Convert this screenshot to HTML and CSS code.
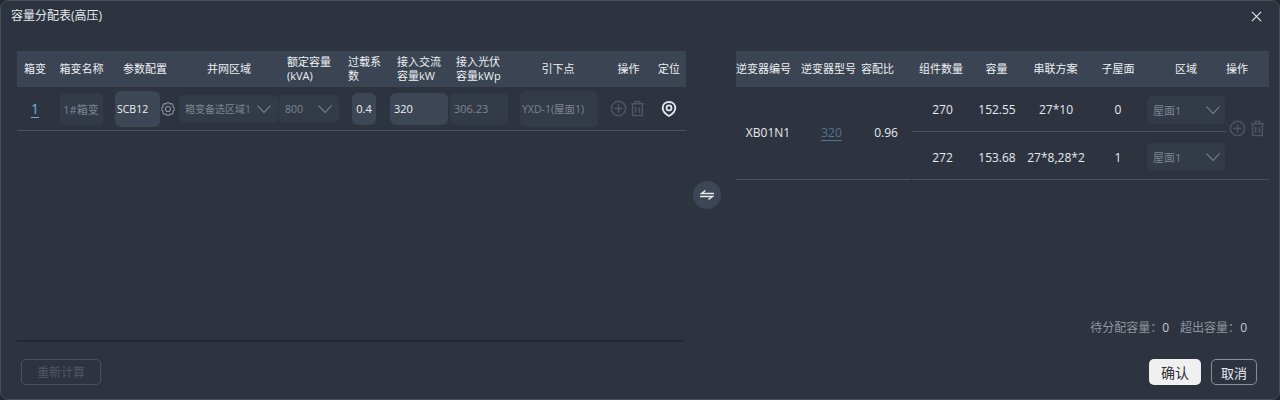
FILE: index.html
```html
<!DOCTYPE html>
<html lang="zh">
<head>
<meta charset="utf-8">
<title>容量分配表(高压)</title>
<link rel="stylesheet" href="styles.css">
</head>
<body>
<svg class="defs" width="0" height="0" aria-hidden="true">
  <symbol id="chev" viewBox="0 0 16 10"><path d="M1.5 1.5 8 8.5l6.500-7" fill="none" stroke="currentColor" stroke-width="1.1"/></symbol>
  <symbol id="plus" viewBox="0 0 18 18"><circle cx="9" cy="9" r="7.6" fill="none" stroke="currentColor" stroke-width="1.5"/><path d="M9 4.5v9M4.5 9h9" fill="none" stroke="currentColor" stroke-width="1.5"/></symbol>
  <symbol id="trash" viewBox="0 0 16 18"><path d="M1 4h14M5.500 4V1.500h5V4M2.800 4v12.500h10.400V4M6 7.500v6M10 7.500v6" fill="none" stroke="currentColor" stroke-width="1.6"/></symbol>
</svg>
<div class="modal">
  <header class="head">
    <span class="title">容量分配表(高压)</span>
    <svg class="close" viewBox="0 0 12 12"><path d="M1 1l10 10M11 1 1 11" fill="none" stroke="currentColor" stroke-width="1.1"/></svg>
  </header>
  <main class="main">
    <section class="left">
      <div class="grid-l thead">
        <div class="c">箱变</div><div class="c">箱变名称</div><div class="c">参数配置</div><div class="c">并网区域</div>
        <div class="s">额定容量<br>(kVA)</div><div class="s s-a">过载系<br>数</div><div class="s s-b">接入交流<br>容量kW</div><div class="s s-c">接入光伏<br>容量kWp</div>
        <div class="c h-yxd">引下点</div><div class="c">操作</div><div class="c">定位</div>
      </div>
      <div class="grid-l lrow">
        <div class="c"><a class="link big">1</a></div>
        <div class="c"><span class="box name">1#箱变</span></div>
        <div class="cfg">
          <span class="box on scb">SCB12</span>
          <svg class="gear" viewBox="0 0 24 24"><path d="M15.100 4.400A3.400 3.400 0 0 1 19.600 8.900 3.400 3.400 0 0 1 19.600 15.100 3.400 3.400 0 0 1 15.100 19.600 3.400 3.400 0 0 1 8.900 19.600 3.400 3.400 0 0 1 4.400 15.100 3.400 3.400 0 0 1 4.400 8.900 3.400 3.400 0 0 1 8.900 4.400 3.400 3.400 0 0 1 15.100 4.400z" fill="none" stroke="currentColor" stroke-width="1.700"/><circle cx="12" cy="12" r="3.800" fill="none" stroke="currentColor" stroke-width="1.700"/></svg>
        </div>
        <div class="sel-w"><span class="box sel area"><span>箱变备选区域1</span><svg class="chev"><use href="#chev"/></svg></span></div>
        <div class="sel-w"><span class="box sel cap"><span>800</span><svg class="chev"><use href="#chev"/></svg></span></div>
        <div class="c"><span class="box on ratio">0.4</span></div>
        <div class="lft"><span class="box on ac">320</span></div>
        <div class="lft"><span class="box pv">306.23</span></div>
        <div class="c"><span class="box yxd">YXD-1(屋面1)</span></div>
        <div class="ops"><svg class="ic-p"><use href="#plus"/></svg><svg class="ic-t"><use href="#trash"/></svg></div>
        <div class="c"><svg class="pin" viewBox="0 0 16 16"><path d="M8 1C4.200 1 1.700 3.500 1.700 6.800 1.700 10 4.900 13.300 8 15c3.100-1.700 6.300-5 6.300-8.200C14.300 3.500 11.800 1 8 1z" fill="none" stroke="currentColor" stroke-width="1.900"/><circle cx="8" cy="6.900" r="2.500" fill="none" stroke="currentColor" stroke-width="1.800"/></svg></div>
      </div>
      <div class="bar"></div>
    </section>
    <div class="mid">
      <button class="swap"><svg viewBox="0 0 14 10"><path d="M14 3.500H1.500L5.500 .5M0 6.500h12.500L8.500 9.500" fill="none" stroke="currentColor" stroke-width="1.400"/></svg></button>
    </div>
    <section class="right">
      <div class="grid-r thead">
        <div class="hl">逆变器编号</div><div class="hl">逆变器型号</div><div class="hl">容配比</div><div class="c">组件数量</div><div class="c">容量</div><div class="c">串联方案</div><div class="c">子屋面</div><div class="c">区域</div><div class="h-op">操作</div>
      </div>
      <div class="rbody">
        <div class="rfix">
          <div class="c">XB01N1</div><div class="c nudge"><a class="link dim">320</a></div><div class="c">0.96</div>
        </div>
        <div class="rsub">
          <div class="grid-s">
            <div class="c nudge">270</div><div class="c">152.55</div><div class="c">27*10</div><div class="c">0</div>
            <div class="sel-r"><span class="box sel roof"><span>屋面1</span><svg class="chev"><use href="#chev"/></svg></span></div>
          </div>
          <div class="grid-s">
            <div class="c nudge">272</div><div class="c">153.68</div><div class="c">27*8,28*2</div><div class="c">1</div>
            <div class="sel-r"><span class="box sel roof"><span>屋面1</span><svg class="chev"><use href="#chev"/></svg></span></div>
          </div>
        </div>
        <div class="rops"><svg class="ic-p"><use href="#plus"/></svg><svg class="ic-t"><use href="#trash"/></svg></div>
      </div>
      <div class="stat"><span>待分配容量：<b>0</b></span><span>超出容量：<b>0</b></span></div>
    </section>
  </main>
  <footer class="foot">
    <button class="btn off">重新计算</button>
    <div class="acts"><button class="btn ok">确认</button><button class="btn no">取消</button></div>
  </footer>
</div>
</body>
</html>
```
FILE: styles.css
```css
* { box-sizing: border-box; }
html, body { margin: 0; height: 400px; overflow: hidden; background: #23262c; }
body { font-family: "Open Sans", "Noto Sans CJK SC", sans-serif; font-size: 12px; color: #e6e9ee; }
.defs { position: absolute; }
.modal { height: 400px; background: #2d3440; border: 1px solid #484e58; border-radius: 8px; display: flex; flex-direction: column; padding: 0 10px 14px 16px; }
.head { height: 50px; flex: none; display: flex; justify-content: space-between; padding-top: 6px; align-items: flex-start; }
.title { font-size: 12px; line-height: 18px; margin-left: -6px; }
.close { width: 11px; height: 11px; margin: 4px 7px 0 0; color: #eceef1; }
.main { flex: 1; display: flex; min-height: 0; }
.left { width: 669px; flex: none; display: flex; flex-direction: column; }
.mid { width: 50px; flex: none; display: flex; align-items: center; justify-content: center; padding: 0 8px 4px 0; }
.swap { width: 28px; height: 28px; border: 0; border-radius: 50%; background: #3d4654; color: #e6e9ee; padding: 0; display: flex; align-items: center; justify-content: center; }
.swap svg { width: 14px; height: 10px; }
.right { width: 533px; flex: none; display: flex; flex-direction: column; }
.thead { height: 36px; background: #3a4452; line-height: 14px; font-size: 11px; align-items: center; color: #eef0f3; }
.c { text-align: center; display: flex; align-items: center; justify-content: center; }
.grid-l { display: grid; grid-template-columns: 36px 57px 70px 98px 65px 42px 65px 65px 90px 47px 34px; }
.lrow { height: 44px; border-bottom: 1px solid #4a5360; align-items: center; }
.s { padding-left: 9px; }
.s-a { padding-left: 5px; }
.s-b { padding-left: 12px; }
.s-c { padding-left: 6px; }
.h-yxd { padding-right: 4px; }
.h-op { padding-left: 2px; }
.link { color: #6fb1dc; text-decoration: underline; text-underline-offset: 3px; }
.link.big { font-size: 14px; line-height: 16px; }
.link.dim { color: #52748f; font-size: 12px; }
.box { display: inline-flex; align-items: center; border-radius: 5px; background: #333b48; color: #7d8490; font-size: 11px; height: 32px; }
.box.on { background: #3d4654; color: #eef0f3; font-size: 11px; border-radius: 6px; }
.name { width: 43px; justify-content: center; margin-right: 1px; }
.cfg { display: flex; align-items: center; padding-left: 5px; }
.box.scb { width: 45px; height: 36px; padding-left: 2px; font-size: 10.500px; }
.gear { width: 16px; height: 16px; color: #8a909a; }
.sel-w { display: flex; }
.sel { justify-content: space-between; height: 28px; padding: 0 6px 0 5px; }
.area { width: 99px; margin-left: -1px; font-size: 10px; padding-left: 6px; white-space: nowrap; }
.cap { width: 60px; margin-left: 1px; font-size: 10.500px; padding-left: 6px; }
.chev { width: 16px; height: 10px; color: #848b96; flex: none; }
.ratio { width: 24px; justify-content: center; }
.lft { display: flex; }
.box.ac { width: 58px; margin-left: 5px; padding-left: 4px; }
.pv { width: 58px; padding-left: 4px; }
.yxd { width: 78px; height: 36px; padding-left: 2px; font-size: 10.500px; margin-right: 2px; white-space: nowrap; }
.ops, .rops { display: flex; align-items: center; color: #4d5562; }
.ops { padding-left: 5px; gap: 3px; }
.ic-p { width: 17px; height: 17px; }
.ic-t { width: 15px; height: 17px; }
.pin { width: 16px; height: 16px; color: #e4e6ea; margin-right: 1px; }
.bar { margin-top: auto; width: 666px; height: 2px; background: #23272e; flex: none; }
.grid-r { display: grid; grid-template-columns: 65px 60px 51px 58px 53px 65px 60px 76px 45px; }
.hl { white-space: nowrap; }
.rbody { display: grid; grid-template-columns: 176px 314px 43px; height: 93px; font-size: 12px; }
.rfix { display: grid; grid-template-columns: 64px 60px 52px; border-bottom: 1px solid #4a5360; margin-right: 1px; padding-bottom: 1px; }
.nudge { padding-left: 3px; }
.rsub { display: flex; flex-direction: column; }
.grid-s { display: grid; grid-template-columns: 58px 54px 64px 60px 78px; height: 48px; padding-top: 3px; border-bottom: 1px solid #4a5360; }
.grid-s:first-child { height: 45px; padding-top: 1px; }
.sel-r { display: flex; align-items: center; }
.roof { width: 78px; font-size: 11px; padding: 0 4px 0 6px; margin-left: -1px; }
.rops { border-bottom: 1px solid #4a5360; padding: 0 0 10px 2px; gap: 4px; margin-left: 1px; }
.stat { margin-top: auto; display: flex; justify-content: flex-end; gap: 11px; color: #8f949c; padding-right: 22px; height: 20px; align-items: center; margin-bottom: 5px; }
.stat b { font-weight: 400; color: #c6c9ce; }
.foot { height: 26px; flex: none; margin-top: 17px; display: flex; justify-content: space-between; padding: 0 12px 0 4px; }
.btn { height: 26px; font: inherit; border-radius: 5px; padding: 0; }
.off { width: 80px; background: transparent; border: 1px solid #49525f; color: #4f5764; }
.acts { display: flex; gap: 10px; }
.ok { width: 52px; background: #f0f0f0; border: 0; color: #2c2f33; font-size: 14px; }
.no { width: 46px; background: transparent; border: 1px solid #8a9099; color: #e6e9ee; font-size: 13px; }
```
